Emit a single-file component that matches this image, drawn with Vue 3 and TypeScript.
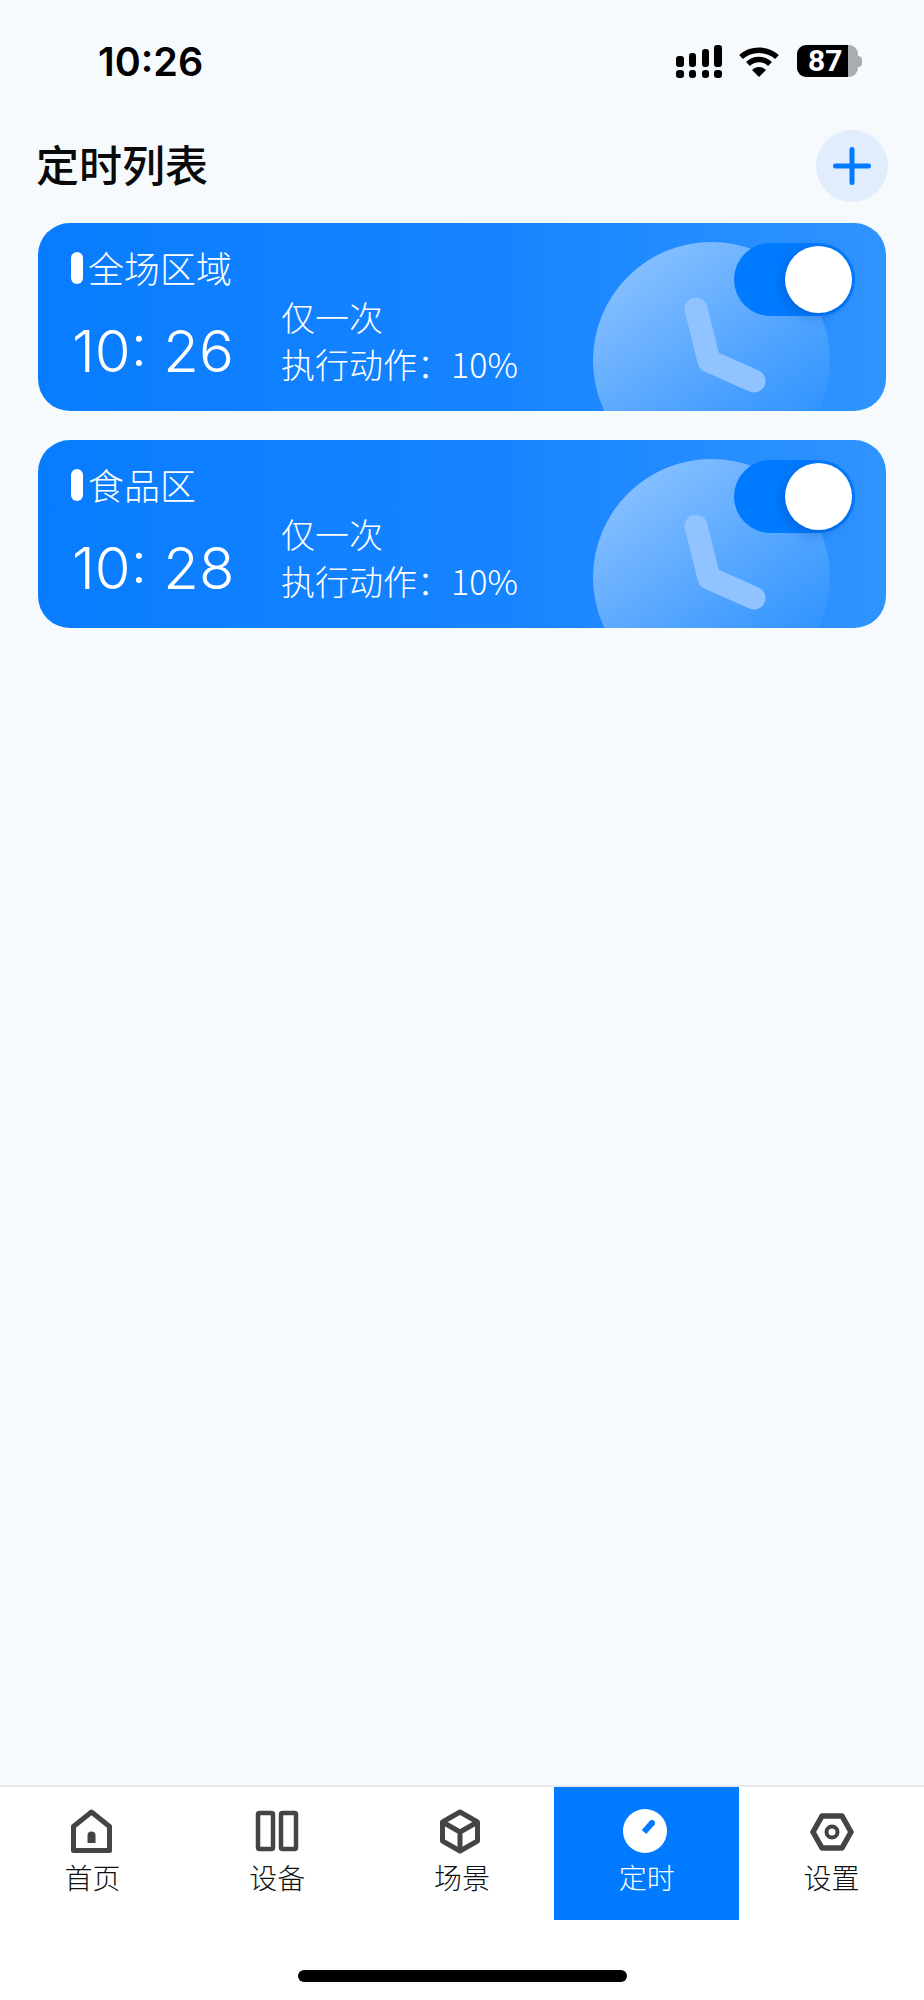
<script setup lang="ts">
interface Timer {
  name: string;
  time: string;
  repeat: string;
  action: string;
}

const timers: Timer[] = [
  { name: "全场区域", time: "10: 26", repeat: "仅一次", action: "执行动作：10%" },
  { name: "食品区", time: "10: 28", repeat: "仅一次", action: "执行动作：10%" },
];

const tabs = [
  { key: "home", label: "首页" },
  { key: "device", label: "设备" },
  { key: "scene", label: "场景" },
  { key: "timer", label: "定时" },
  { key: "settings", label: "设置" },
];
</script>

<template>
  <div class="page">
    <div class="status-bar">
      <span class="clock-text">10:26</span>
      <div class="status-icons">
        <svg class="ic-signal" width="46" height="33" viewBox="0 0 46 33" fill="#000">
          <rect x="0" y="11" width="8" height="11" rx="3" />
          <rect x="13" y="8" width="7" height="14" rx="3" />
          <rect x="26" y="4" width="7" height="18" rx="3" />
          <rect x="38" y="0" width="8" height="22" rx="3" />
          <rect x="0" y="25" width="8" height="8" rx="3" />
          <rect x="13" y="25" width="7" height="8" rx="3" />
          <rect x="26" y="25" width="7" height="8" rx="3" />
          <rect x="38" y="25" width="8" height="8" rx="3" />
        </svg>
        <svg class="ic-wifi" width="40" height="30" viewBox="0 0 40 30" fill="none" stroke="#000" stroke-width="5.500">
          <path d="M2 10 C12 1 28 1 38 10" />
          <path d="M9 17 C15 11 25 11 31 17" />
          <path d="M13 23 L20 30 L27 23 C23 19 17 19 13 23 Z" fill="#000" stroke="none" />
        </svg>
        <div class="battery">
          <div class="battery-body">87</div>
          <div class="battery-nub" />
        </div>
      </div>
    </div>

    <main class="content">
      <div class="list-head">
        <h1 class="list-title">定时列表</h1>
        <button class="add-btn" type="button">
          <svg width="38" height="38" viewBox="0 0 38 38" stroke="#007bff" stroke-width="5" stroke-linecap="round">
            <path d="M19 2.500V35.500M2.500 19H35.500" />
          </svg>
        </button>
      </div>

      <div v-for="t in timers" :key="t.name" class="card">
        <svg class="card-clock" width="237" height="237" viewBox="0 0 237 237" fill="none">
          <defs>
            <linearGradient id="clockFace" x1="0.15" y1="0.1" x2="0.85" y2="0.9">
              <stop offset="0" stop-color="#fff" stop-opacity="0.46" />
              <stop offset="1" stop-color="#fff" stop-opacity="0" />
            </linearGradient>
          </defs>
          <circle cx="118.500" cy="118.500" r="118.500" fill="url(#clockFace)" />
          <path
            d="M103 67 L116 119 L161 139"
            stroke="#90c3ff"
            stroke-width="23"
            stroke-linecap="round"
            stroke-linejoin="round"
          />
        </svg>

        <div class="card-name">
          <span class="name-pill" />
          <span class="name-text">{{ t.name }}</span>
        </div>
        <div class="card-row">
          <span class="card-time">{{ t.time }}</span>
          <div class="card-info">
            <p>{{ t.repeat }}</p>
            <p>{{ t.action }}</p>
          </div>
        </div>

        <div class="switch">
          <span class="switch-knob" />
        </div>
      </div>
    </main>

    <nav class="tabbar">
      <div class="tabs">
        <div v-for="tab in tabs" :key="tab.key" class="tab" :class="{ active: tab.key === 'timer' }">
          <svg v-if="tab.key === 'home'" class="tab-ic" width="44" height="46" viewBox="0 0 44 46" fill="none" stroke="#444" stroke-width="5" stroke-linejoin="round">
            <path d="M21.500 4 L39.500 18.500 V42.500 H3.500 V18.500 Z" />
            <path d="M17.500 35 V27.500 A4 4 0 0 1 25.500 27.500 V35 Z" fill="#444" stroke="none" />
          </svg>
          <svg v-else-if="tab.key === 'device'" class="tab-ic" width="44" height="46" viewBox="0 0 44 46" fill="none" stroke="#444" stroke-width="4.500" stroke-linejoin="round">
            <rect x="3" y="5" width="15" height="36" rx="1.500" />
            <rect x="26" y="5" width="15" height="36" rx="1.500" />
          </svg>
          <svg v-else-if="tab.key === 'scene'" class="tab-ic shift" width="44" height="46" viewBox="0 0 44 46" fill="none" stroke="#444" stroke-width="5" stroke-linejoin="round">
            <path d="M22 4 L39.500 14 V33 L22 43 L4.500 33 V14 Z" />
            <path d="M4.500 14 L22 24 L39.500 14 M22 24 V43" />
          </svg>
          <svg v-else-if="tab.key === 'timer'" class="tab-ic shift" width="46" height="46" viewBox="0 0 46 46">
            <circle cx="23" cy="23" r="22" fill="#fff" />
            <path d="M22 24 L30 15" stroke="#007bff" stroke-width="6" />
            <circle cx="30" cy="15" r="3" fill="#007bff" />
          </svg>
          <svg v-else class="tab-ic" width="44" height="46" viewBox="0 0 44 46" fill="none" stroke="#444" stroke-width="5.500" stroke-linejoin="round">
            <path d="M12 8 H32 L41 24 L32 40 H12 L3 24 Z" />
            <circle cx="22" cy="24" r="5.500" stroke-width="4" />
          </svg>
          <span class="tab-label">{{ tab.label }}</span>
        </div>
      </div>
      <div class="home-bar-wrap">
        <div class="home-bar" />
      </div>
    </nav>
  </div>
</template>

<style>
html,
body {
  margin: 0;
  background: #f6fafd;
}
</style>

<style scoped>
.page {
  width: 924px;
  height: 2000px;
  display: flex;
  flex-direction: column;
  background: #f6fafd;
  font-family: "Noto Sans CJK SC", "Noto Sans", sans-serif;
  overflow: hidden;
}

.status-bar {
  height: 130px;
  box-sizing: border-box;
  padding: 45px 62px 0 98px;
  display: flex;
  justify-content: space-between;
  align-items: flex-start;
  flex-shrink: 0;
}
.clock-text {
  font-family: Inter, "Liberation Sans", sans-serif;
  font-size: 39.500px;
  font-weight: 600;
  line-height: 35px;
  color: #000;
}
.status-icons {
  display: flex;
  align-items: flex-start;
  gap: 17px;
}
.ic-wifi {
  margin-top: 2px;
}
.battery {
  display: flex;
  align-items: center;
  margin-left: 1px;
}
.battery-body {
  width: 61px;
  height: 32px;
  border-radius: 9px;
  background: linear-gradient(90deg, #000 84%, #a9adb1 84%);
  color: #fff;
  font-family: Roboto, "Liberation Sans", sans-serif;
  font-size: 30px;
  font-weight: 700;
  line-height: 32px;
  padding-left: 11px;
  box-sizing: border-box;
}
.battery-nub {
  width: 4px;
  height: 11px;
  border-radius: 0 6px 6px 0;
  background: #a9adb1;
}

.content {
  flex: 1;
  padding: 0 38px;
  min-height: 0;
}
.list-head {
  display: flex;
  align-items: center;
  justify-content: space-between;
  height: 72px;
  margin-bottom: 21px;
}
.list-title {
  margin: 0 0 0 -2px;
  padding-bottom: 5px;
  font-size: 43px;
  font-weight: 500;
  line-height: 67px;
  color: #0a0a0a;
}
.add-btn {
  width: 72px;
  height: 72px;
  margin-right: -2px;
  padding: 0;
  border: 0;
  border-radius: 50%;
  background: #e1ecfd;
  display: flex;
  align-items: center;
  justify-content: center;
}

.card {
  position: relative;
  height: 188px;
  box-sizing: border-box;
  margin-bottom: 29px;
  padding: 23px 33px 0;
  border-radius: 32px;
  overflow: hidden;
  color: #fff;
  background: linear-gradient(90deg, #087cff 0%, #1784ff 55%, #3094ff 100%);
}
.card-clock {
  position: absolute;
  left: 555px;
  top: 19px;
}
.card-name {
  position: relative;
  display: flex;
  align-items: center;
  gap: 5px;
  height: 44px;
  font-size: 36px;
  font-weight: 300;
  line-height: 44px;
}
.name-text {
  padding-bottom: 2px;
}
.name-pill {
  width: 12px;
  height: 32px;
  border-radius: 6px;
  background: #fff;
}
.card-row {
  position: relative;
  display: flex;
  align-items: center;
  margin-top: 4px;
}
.card-time {
  width: 209px;
  margin: 20px 0 0 1px;
  font-family: Inter, "Liberation Sans", sans-serif;
  font-size: 58px;
  font-weight: 300;
  line-height: 70px;
}
.card-info p {
  margin: 0;
  font-size: 34px;
  font-weight: 300;
  line-height: 46.500px;
}
.switch {
  position: absolute;
  left: 696px;
  top: 20px;
  width: 121px;
  height: 73px;
  border-radius: 37px;
  background: #007bff;
}
.switch-knob {
  position: absolute;
  right: 3px;
  top: 3px;
  width: 67px;
  height: 67px;
  border-radius: 50%;
  background: #fff;
  box-shadow: -4px 4px 12px rgba(0, 70, 160, 0.35);
}

.tabbar {
  flex-shrink: 0;
  height: 215px;
  background: #fff;
  border-top: 2px solid #e6e8ea;
  box-sizing: border-box;
}
.tabs {
  display: flex;
  height: 133px;
}
.tab {
  flex: 1;
  display: flex;
  flex-direction: column;
  align-items: center;
  padding-top: 21px;
  box-sizing: border-box;
  color: #111;
}
.tab.active {
  background: #007bff;
  color: #fff;
}
.tab-ic.shift {
  margin-left: -3px;
}
.tab-label {
  margin-top: 6px;
  font-size: 28px;
  font-weight: 300;
  line-height: 34px;
}
.home-bar-wrap {
  display: flex;
  justify-content: center;
  padding-top: 50px;
}
.home-bar {
  width: 329px;
  height: 12px;
  border-radius: 6px;
  background: #000;
}
</style>
